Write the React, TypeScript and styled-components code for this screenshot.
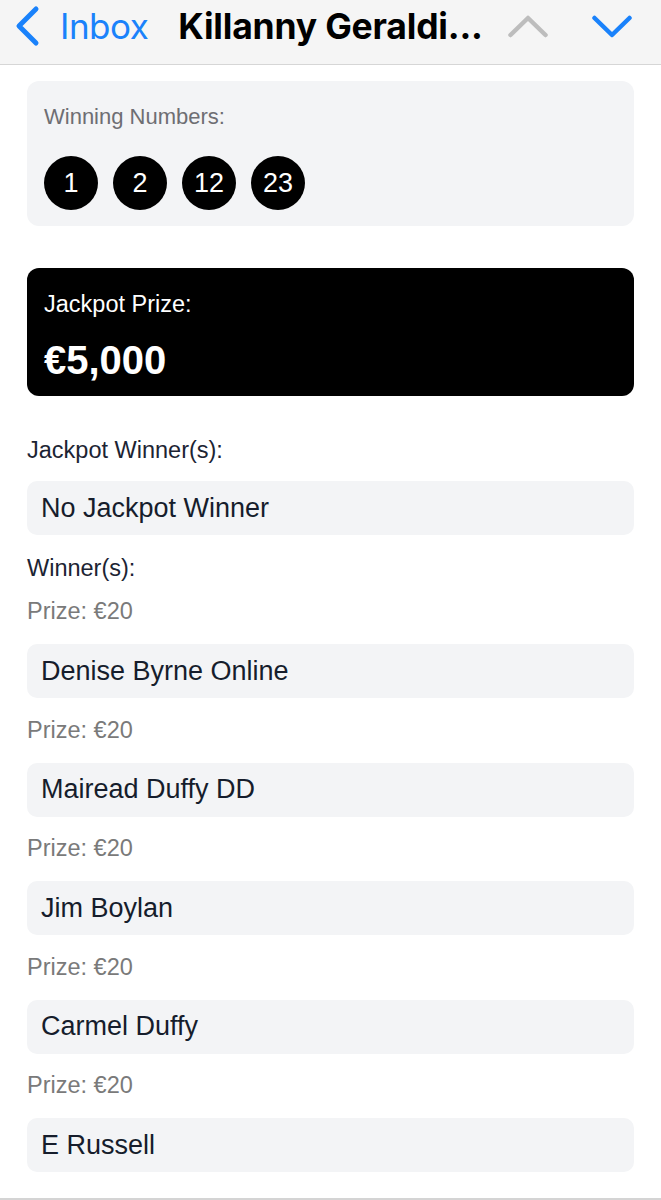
import React from "react";
import styled, { createGlobalStyle } from "styled-components";

const GlobalStyle = createGlobalStyle`
  body {
    margin: 0;
    background: #ffffff;
    font-family: "Liberation Sans", Arial, sans-serif;
  }
`;

const Page = styled.div`
  width: 661px;
  height: 1200px;
  overflow: hidden;
  display: flex;
  flex-direction: column;
  border-bottom: 2px solid #d4d4d4;
  box-sizing: border-box;
`;

const NavBar = styled.div`
  height: 65px;
  flex-shrink: 0;
  display: flex;
  align-items: center;
  padding: 0 0 0 14px;
  background: #f5f5f5;
  border-bottom: 1px solid #d6d6d6;
  box-sizing: border-box;
  font-family: Inter, "Liberation Sans", sans-serif;
`;

const BackButton = styled.div`
  display: flex;
  align-items: center;
  gap: 20px;
  color: #1a82fb;
  font-size: 35px;
  letter-spacing: -0.5px;
  margin-top: -12px;
`;

const Title = styled.div`
  margin-left: 30px;
  font-size: 35.5px;
  font-weight: 700;
  color: #000;
  letter-spacing: -0.2px;
  white-space: nowrap;
  margin-top: -12px;
`;

const Arrows = styled.div`
  display: flex;
  align-items: center;
  gap: 44px;
  margin-left: 25px;
  margin-top: -12px;
`;

const Content = styled.div`
  display: flex;
  flex-direction: column;
  padding: 16px 27px 0;
`;

const Card = styled.div<{ $dark?: boolean }>`
  background: ${(p) => (p.$dark ? "#000" : "#f3f4f6")};
  border-radius: 12px;
  padding: 22px 17px ${(p) => (p.$dark ? "14px" : "16px")};
  display: flex;
  flex-direction: column;
`;

const CardLabel = styled.div<{ $dark?: boolean }>`
  font-size: ${(p) => (p.$dark ? "23.5px" : "22px")};
  color: ${(p) => (p.$dark ? "#fff" : "#6e6e73")};
  line-height: 28px;
`;

const Balls = styled.div`
  display: flex;
  gap: 15px;
  margin-top: 25px;
`;

const Ball = styled.div`
  width: 54px;
  height: 54px;
  border-radius: 50%;
  background: #000;
  color: #fff;
  font-size: 27px;
  display: flex;
  align-items: center;
  justify-content: center;
`;

const Amount = styled.div`
  font-size: 40px;
  font-weight: 700;
  color: #fff;
  margin-top: 20px;
  line-height: 44px;
`;

const SectionLabel = styled.div<{ $muted?: boolean }>`
  font-size: 23.5px;
  line-height: 28px;
  color: ${(p) => (p.$muted ? "#7a7a7a" : "#1c2433")};
`;

const NameBox = styled.div`
  height: 54px;
  background: #f3f4f6;
  border-radius: 10px;
  display: flex;
  align-items: center;
  padding: 0 14px;
  font-size: 27px;
  color: #161d2c;
`;

const Spacer = styled.div<{ $h: number }>`
  height: ${(p) => p.$h}px;
  flex-shrink: 0;
`;

const Chevron = ({ d, color }: { d: string; color: string }) => (
  <svg width="40" height="40" viewBox="0 0 40 40" fill="none">
    <path d={d} stroke={color} strokeWidth="4.5" strokeLinecap="round" strokeLinejoin="round" />
  </svg>
);

const winners = [
  "Denise Byrne Online",
  "Mairead Duffy DD",
  "Jim Boylan",
  "Carmel Duffy",
  "E Russell",
];

export default function App() {
  return (
    <>
      <GlobalStyle />
      <Page>
        <NavBar>
          <BackButton>
            <svg width="26" height="42" viewBox="0 0 26 42" fill="none">
              <path d="M22 4 L5 21 L22 38" stroke="#1a82fb" strokeWidth="5" strokeLinecap="round" strokeLinejoin="round" />
            </svg>
            Inbox
          </BackButton>
          <Title>Killanny Geraldi...</Title>
          <Arrows>
            <Chevron d="M2.5 29 L20 12 L37.5 29" color="#bdbdbd" />
            <Chevron d="M2.5 12 L20 29 L37.5 12" color="#1a82fb" />
          </Arrows>
        </NavBar>
        <Content>
          <Card>
            <CardLabel>Winning Numbers:</CardLabel>
            <Balls>
              {[1, 2, 12, 23].map((n) => (
                <Ball key={n}>{n}</Ball>
              ))}
            </Balls>
          </Card>
          <Spacer $h={42} />
          <Card $dark>
            <CardLabel $dark>Jackpot Prize:</CardLabel>
            <Amount>€5,000</Amount>
          </Card>
          <Spacer $h={40} />
          <SectionLabel>Jackpot Winner(s):</SectionLabel>
          <Spacer $h={17} />
          <NameBox>No Jackpot Winner</NameBox>
          <Spacer $h={19} />
          <SectionLabel>Winner(s):</SectionLabel>
          <Spacer $h={15} />
          {winners.map((w, i) => (
            <React.Fragment key={w}>
              {i > 0 && <Spacer $h={17.5} />}
              <SectionLabel $muted>Prize: €20</SectionLabel>
              <Spacer $h={19} />
              <NameBox>{w}</NameBox>
            </React.Fragment>
          ))}
        </Content>
      </Page>
    </>
  );
}
